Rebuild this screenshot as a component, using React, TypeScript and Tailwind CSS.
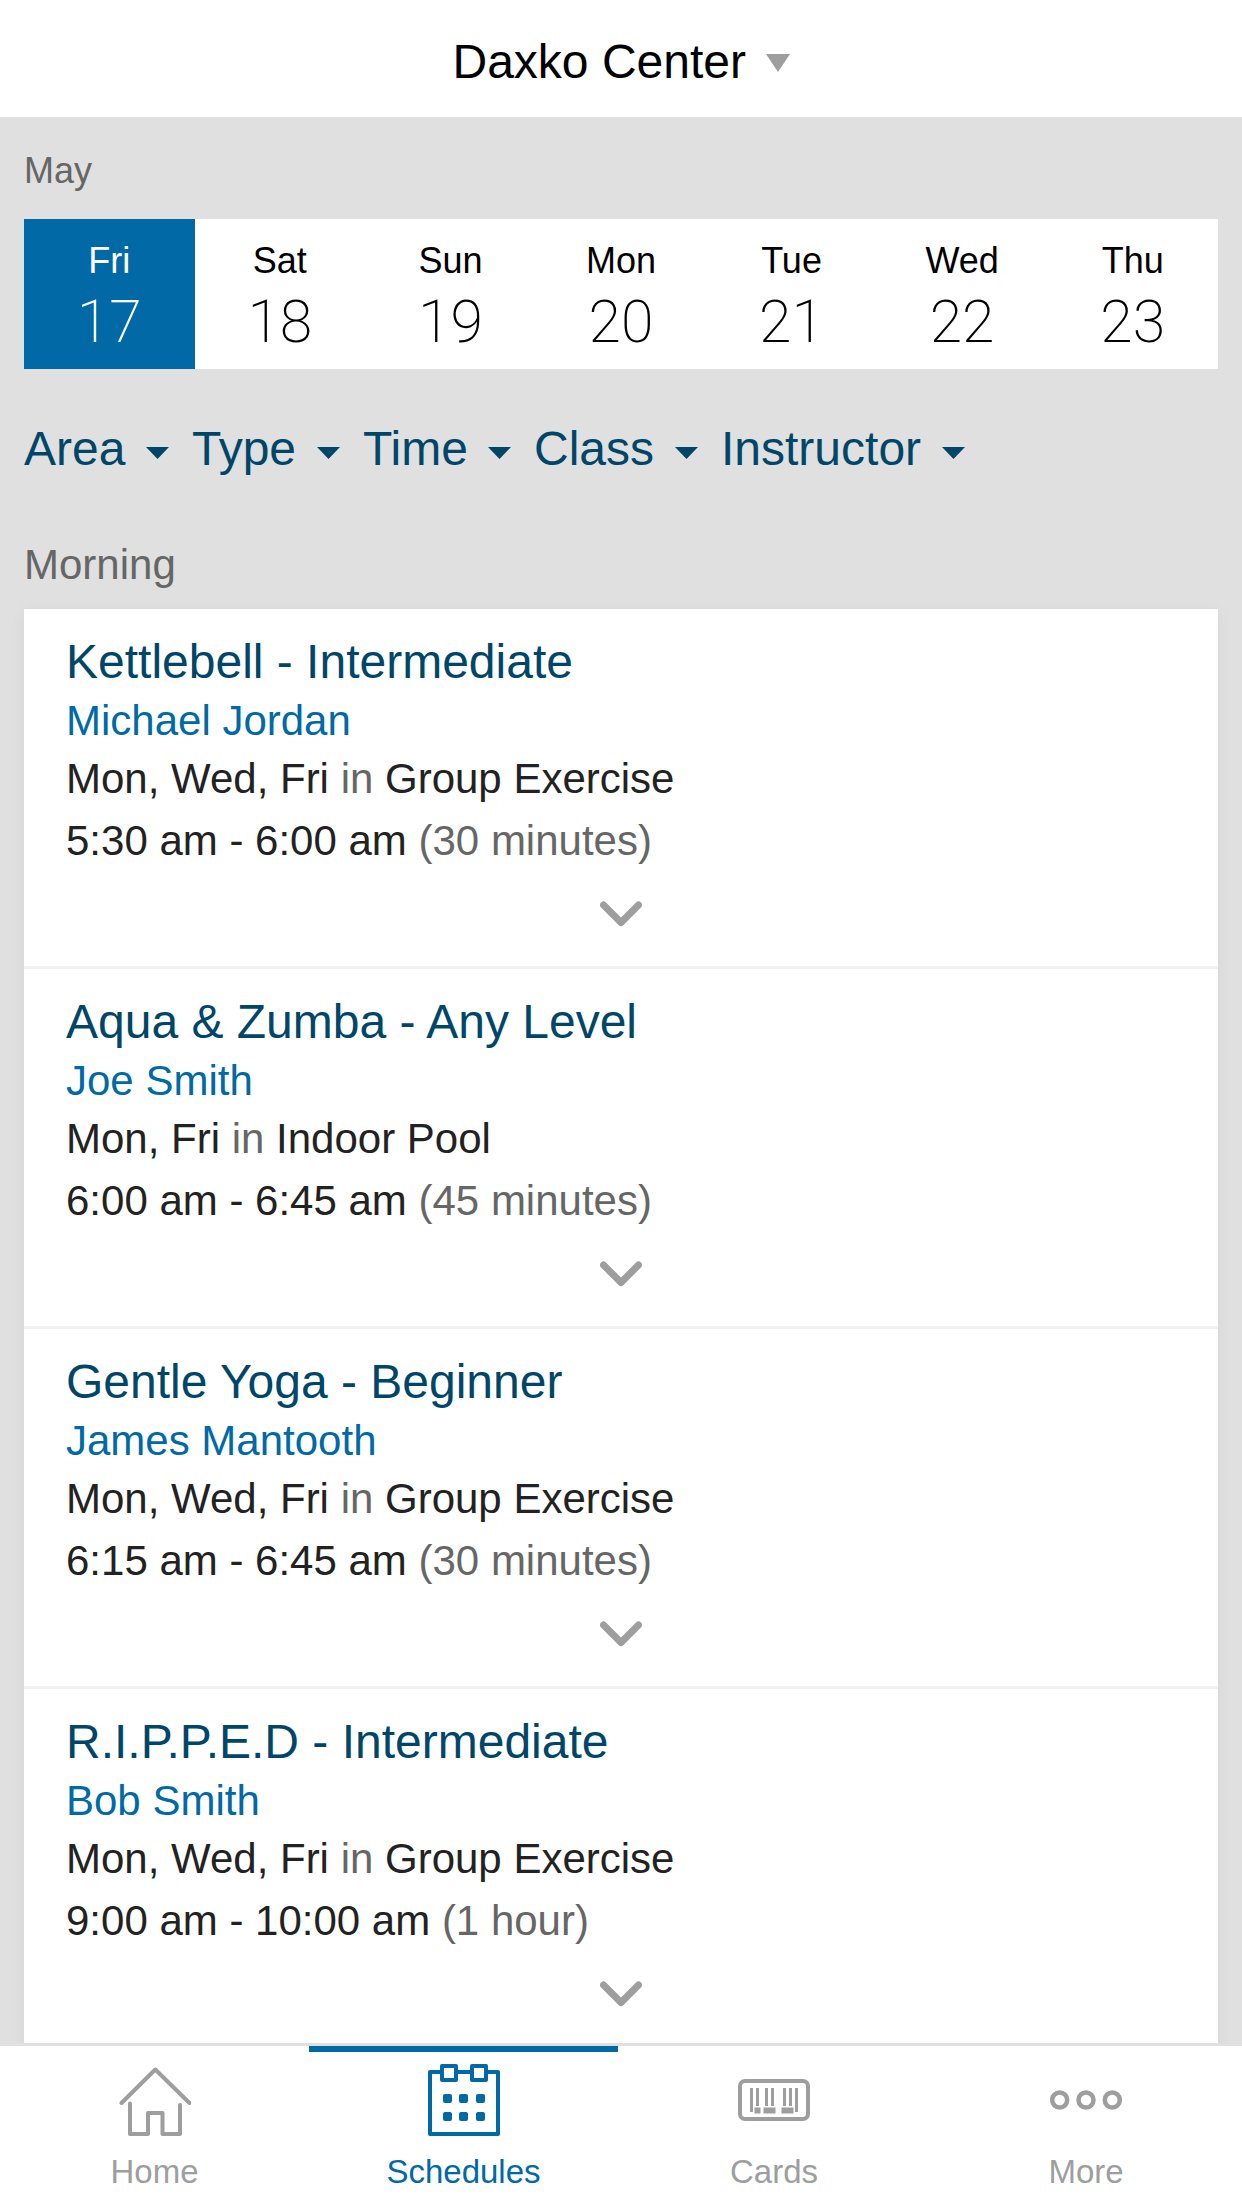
import { useState, type ReactNode } from 'react'

interface GymClass {
  id: number
  title: string
  instructor: string
  days: string
  room: string
  time: string
  duration: string
}

const days = [
  { name: 'Fri', date: 17 },
  { name: 'Sat', date: 18 },
  { name: 'Sun', date: 19 },
  { name: 'Mon', date: 20 },
  { name: 'Tue', date: 21 },
  { name: 'Wed', date: 22 },
  { name: 'Thu', date: 23 },
]

const filters = ['Area', 'Type', 'Time', 'Class', 'Instructor']

const classes: GymClass[] = [
  {
    id: 1,
    title: 'Kettlebell - Intermediate',
    instructor: 'Michael Jordan',
    days: 'Mon, Wed, Fri',
    room: 'Group Exercise',
    time: '5:30 am - 6:00 am',
    duration: '(30 minutes)',
  },
  {
    id: 2,
    title: 'Aqua & Zumba - Any Level',
    instructor: 'Joe Smith',
    days: 'Mon, Fri',
    room: 'Indoor Pool',
    time: '6:00 am - 6:45 am',
    duration: '(45 minutes)',
  },
  {
    id: 3,
    title: 'Gentle Yoga - Beginner',
    instructor: 'James Mantooth',
    days: 'Mon, Wed, Fri',
    room: 'Group Exercise',
    time: '6:15 am - 6:45 am',
    duration: '(30 minutes)',
  },
  {
    id: 4,
    title: 'R.I.P.P.E.D - Intermediate',
    instructor: 'Bob Smith',
    days: 'Mon, Wed, Fri',
    room: 'Group Exercise',
    time: '9:00 am - 10:00 am',
    duration: '(1 hour)',
  },
]

function HomeIcon() {
  return (
    <svg className="size-[72px]" viewBox="0 0 72 72" fill="none" stroke="currentColor" strokeWidth="4" strokeLinecap="round" strokeLinejoin="round" aria-hidden="true">
      <path d="M2.5 39 36.3 5.5 70.5 39" />
      <path d="M11 39.5V70H29V49H43.5V70H61V41" />
    </svg>
  )
}

function CalendarIcon() {
  return (
    <svg className="size-[72px]" viewBox="0 0 72 72" fill="none" stroke="currentColor" strokeWidth="4" strokeLinejoin="round" aria-hidden="true">
      <rect x="2" y="8" width="68" height="62" />
      <rect x="14" y="2" width="14" height="14" fill="white" />
      <rect x="44" y="2" width="14" height="14" fill="white" />
      <g fill="currentColor" stroke="none">
        <rect x="15" y="30" width="9" height="9" rx="2" />
        <rect x="31" y="30" width="9" height="9" rx="2" />
        <rect x="48" y="30" width="9" height="9" rx="2" />
        <rect x="15" y="48" width="9" height="9" rx="2" />
        <rect x="31" y="48" width="9" height="9" rx="2" />
        <rect x="48" y="48" width="9" height="9" rx="2" />
      </g>
    </svg>
  )
}

function CardIcon() {
  return (
    <svg className="size-[72px]" viewBox="0 0 72 72" fill="currentColor" aria-hidden="true">
      <rect x="2" y="17" width="68" height="38" rx="5" fill="none" stroke="currentColor" strokeWidth="4" />
      <path d="M12 24h3v24h-3zM18 24h3v18h-3zM27 24h3v18h-3zM33 24h3v18h-3zM45 24h3v18h-3zM51 24h3v18h-3zM57 24h3v24h-3z" />
      <path d="M16.5 43.5h6v6h-6zM25.5 43.5h12v6h-12zM43.5 43.5h12v6h-12z" />
    </svg>
  )
}

function MoreIcon() {
  return (
    <svg className="size-[72px]" viewBox="0 0 72 72" fill="none" stroke="currentColor" strokeWidth="4.5" aria-hidden="true">
      <circle cx="9.7" cy="36" r="7.5" />
      <circle cx="36" cy="36" r="7.5" />
      <circle cx="62.3" cy="36" r="7.5" />
    </svg>
  )
}

const tabs: { label: string; icon: ReactNode; active?: boolean }[] = [
  { label: 'Home', icon: <HomeIcon /> },
  { label: 'Schedules', icon: <CalendarIcon />, active: true },
  { label: 'Cards', icon: <CardIcon /> },
  { label: 'More', icon: <MoreIcon /> },
]

function Filter({ name }: { name: string }) {
  return (
    <div className="relative text-[#004669]">
      <select aria-label={name} className="appearance-none bg-transparent pr-[43px] text-[48px] leading-[60px]">
        <option>{name}</option>
      </select>
      <svg className="pointer-events-none absolute right-0 top-7 h-3 w-[23px]" viewBox="0 0 23 12" fill="currentColor" aria-hidden="true">
        <path d="M0 0h23L11.5 12z" />
      </svg>
    </div>
  )
}

function ClassItem({ item }: { item: GymClass }) {
  return (
    <li className="border-b-3 border-[#f1f1f1] px-[42px] pt-[23px] pb-2 text-[42px] leading-[58px] text-[#222222]">
      <h3 className="text-[48px] leading-[60px] text-[#004669]">{item.title}</h3>
      <p>
        <a href="#instructor" className="text-[#0069a6]">{item.instructor}</a>
      </p>
      <p>
        {item.days} <span className="text-[#666666]">in</span> {item.room}
      </p>
      <p className="mt-1">
        {item.time} <span className="text-[#666666]">{item.duration}</span>
      </p>
      <button type="button" aria-label={`Show details for ${item.title}`} className="flex h-[88px] w-full items-center justify-center text-[#9e9e9e]">
        <svg className="h-[26px] w-[42px]" viewBox="0 0 42 26" fill="none" stroke="currentColor" strokeWidth="7" strokeLinecap="round" strokeLinejoin="round" aria-hidden="true">
          <path d="M3.5 4 21 21.5 38.5 4" />
        </svg>
      </button>
    </li>
  )
}

export default function App() {
  const [selected, setSelected] = useState(17)

  return (
    <div className="flex h-screen flex-col bg-[#e0e0e0] font-['Liberation_Sans',Arial,sans-serif]">
      <header className="flex justify-center bg-white pt-8 pb-[25px]">
        <div className="relative">
          <select aria-label="Location" className="appearance-none bg-transparent pr-[43px] text-[48px] leading-[60px] text-black">
            <option>Daxko Center</option>
          </select>
          <svg className="pointer-events-none absolute right-0 top-[22px] h-[18px] w-6 text-[#9e9e9e]" viewBox="0 0 24 18" fill="currentColor" aria-hidden="true">
            <path d="M0 0h24L12 18z" />
          </svg>
        </div>
      </header>

      <main className="min-h-0 flex-1 overflow-y-auto px-6 pt-[30px] [scrollbar-width:none]">
        <h1 className="mb-6 text-[36px] leading-[48px] text-[#666666]">May</h1>

        <div className="grid grid-cols-7 bg-white">
          {days.map((day) => (
            <button
              key={day.date}
              type="button"
              aria-pressed={day.date === selected}
              onClick={() => setSelected(day.date)}
              className={`flex flex-col items-center pt-[18px] pb-[10px] ${day.date === selected ? 'bg-[#0069a6] text-white' : 'text-black'}`}
            >
              <span className="text-[36px] leading-[48px]">{day.name}</span>
              <span className="font-[Roboto,sans-serif] text-[59px] leading-[74px] font-extralight">{day.date}</span>
            </button>
          ))}
        </div>

        <div className="mt-[50px] flex flex-wrap gap-x-[23px]">
          {filters.map((name) => (
            <Filter key={name} name={name} />
          ))}
        </div>

        <h2 className="mt-[57px] mb-[15px] text-[42px] leading-[58px] text-[#666666]">Morning</h2>
        <ul className="bg-white shadow-[0_3px_15px_rgba(0,0,0,0.05)]">
          {classes.map((item) => (
            <ClassItem key={item.id} item={item} />
          ))}
        </ul>
      </main>

      <nav className="grid grid-cols-[309fr_309fr_312fr_312fr] border-t-3 border-[#e0e0e0] bg-white">
        {tabs.map((tab) => (
          <a
            key={tab.label}
            href={`#${tab.label.toLowerCase()}`}
            aria-current={tab.active ? 'page' : undefined}
            className={`flex flex-col items-center gap-3 border-t-6 pt-3 pb-3 text-[33px] leading-[48px] ${tab.active ? 'border-[#0069a6] text-[#0069a6]' : 'border-transparent text-[#9e9e9e]'}`}
          >
            {tab.icon}
            {tab.label}
          </a>
        ))}
      </nav>
    </div>
  )
}
